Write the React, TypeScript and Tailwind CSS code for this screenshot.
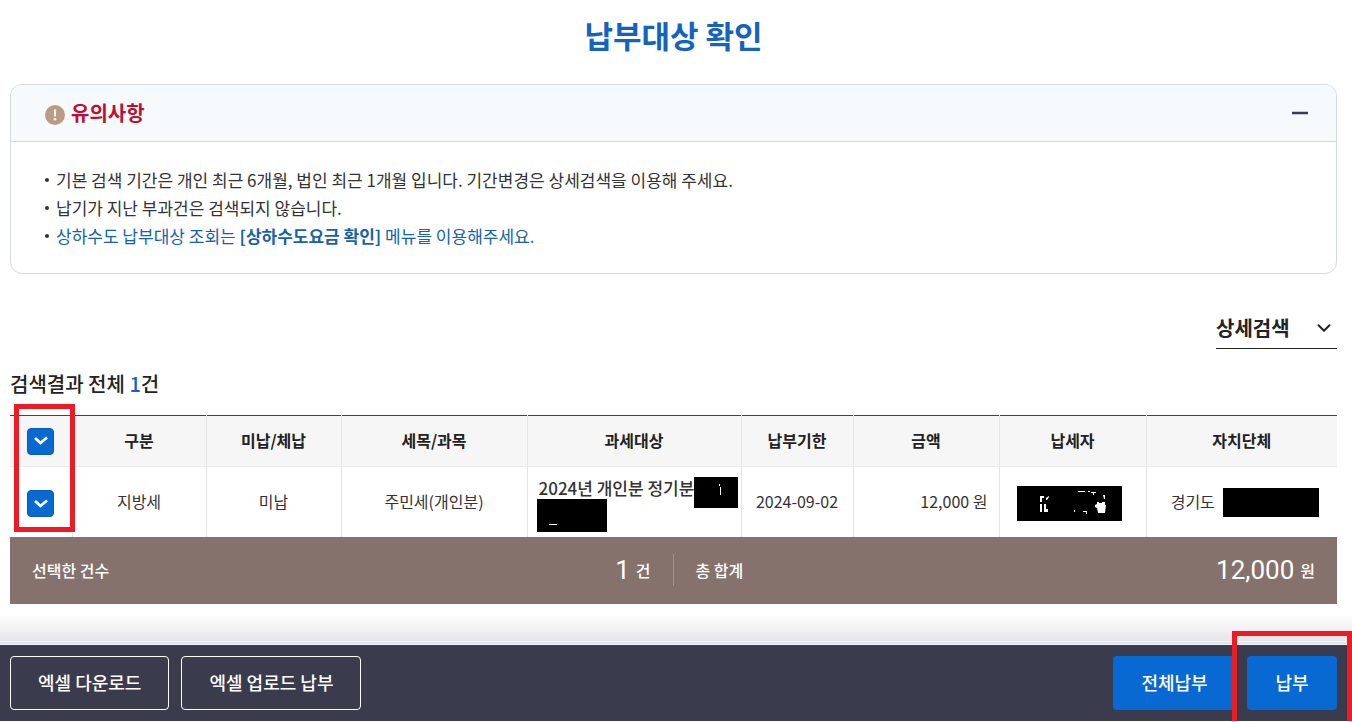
import { useState } from 'react'
import type { ReactNode } from 'react'
import clsx from 'clsx'
import { ChevronDown } from 'lucide-react'

interface Bill {
  kind: string
  status: string
  tax: string
  target: string
  dueDate: string
  amount: string
  region: string
}

const columns = [
  { label: '구분', width: 'w-[134px]' },
  { label: '미납/체납', width: 'w-[135px]' },
  { label: '세목/과목', width: 'w-[186px]' },
  { label: '과세대상', width: 'w-[214px]' },
  { label: '납부기한', width: 'w-[112px]' },
  { label: '금액', width: 'w-[146px]' },
  { label: '납세자', width: 'w-[147px]' },
  { label: '자치단체', width: 'w-[191px]' },
]

const bills: Bill[] = [
  {
    kind: '지방세',
    status: '미납',
    tax: '주민세(개인분)',
    target: '2024년 개인분 정기분',
    dueDate: '2024-09-02',
    amount: '12,000',
    region: '경기도',
  },
]

interface CheckProps {
  label: string
  checked: boolean
  onChange: (checked: boolean) => void
}

function Check({ label, checked, onChange }: CheckProps) {
  return (
    <label className="ml-[17px] grid size-[27px] cursor-pointer place-items-center">
      <input
        type="checkbox"
        aria-label={label}
        checked={checked}
        onChange={(e) => onChange(e.target.checked)}
        className="col-start-1 row-start-1 size-[27px] appearance-none rounded border border-[#0a5cb8] bg-white checked:bg-[#0869d2]"
      />
      {checked && (
        <svg viewBox="0 0 14 10" className="pointer-events-none z-10 col-start-1 row-start-1 h-[10px] w-[14px]">
          <path d="M1 2 L6.5 7 L13 1.5" fill="none" stroke="#fff" strokeWidth="2.8" />
        </svg>
      )}
    </label>
  )
}

function ActionButton({ children, className }: { children: ReactNode; className: string }) {
  return (
    <button
      type="button"
      className={clsx(
        'h-[54px] cursor-pointer rounded pb-0.5 text-lg font-medium whitespace-nowrap text-white',
        className
      )}
    >
      {children}
    </button>
  )
}

function Notice() {
  const [open, setOpen] = useState(true)

  return (
    <section className="overflow-hidden rounded-xl border border-[#d5dade]">
      <div className="flex h-14 items-center justify-between bg-[#f7fafd] pr-[27px] pl-[34px]">
        <h2 className="flex items-center gap-[6px] text-xl font-bold text-[#bf0d35]">
          <svg viewBox="0 0 20 20" className="mt-1 size-5">
            <circle cx="10" cy="10" r="10" fill="#bb9c83" />
            <path d="M8.8 4.5h2.4l-.4 7H9.2z" fill="#fff" />
            <circle cx="10" cy="14.3" r="1.3" fill="#fff" />
          </svg>
          유의사항
        </h2>
        <button
          type="button"
          aria-label="유의사항 접기"
          aria-expanded={open}
          onClick={() => setOpen(!open)}
          className="flex h-6 cursor-pointer items-center"
        >
          <svg viewBox="0 0 18 4" className="h-1 w-[18px]">
            <path d="M1 2h16" stroke="#3a3b4d" strokeWidth="2.4" />
          </svg>
        </button>
      </div>
      {open && (
        <ul className="border-t border-[#ccd8dd] pt-6 pb-[23px] pl-[34px] text-[17px] leading-7 text-[#333]">
          <li className="flex items-center gap-[7px]">
            <span className="size-1 rounded-full bg-[#333]" />
            기본 검색 기간은 개인 최근 6개월, 법인 최근 1개월 입니다. 기간변경은 상세검색을 이용해 주세요.
          </li>
          <li className="flex items-center gap-[7px]">
            <span className="size-1 rounded-full bg-[#333]" />
            납기가 지난 부과건은 검색되지 않습니다.
          </li>
          <li className="flex items-center gap-[7px]">
            <span className="size-1 rounded-full bg-[#333]" />
            <p className="text-[#1562a8]">
              상하수도 납부대상 조회는 <b>[상하수도요금 확인]</b> 메뉴를 이용해주세요.
            </p>
          </li>
        </ul>
      )}
    </section>
  )
}

export default function App() {
  const [selected, setSelected] = useState<boolean[]>(bills.map(() => true))
  const count = selected.filter(Boolean).length

  return (
    <div className="bg-white font-['Noto_Sans_CJK_KR',sans-serif] text-[#222]">
      <main className="pr-[15px] pl-[10px]">
        <h1 className="pt-[11px] pb-[25px] text-center text-[31px] leading-[48px] font-bold text-[#1563bd]">
          납부대상 확인
        </h1>

        <Notice />

        <div className="mt-9 flex justify-end">
          <button
            type="button"
            className="flex h-[39px] w-[121px] cursor-pointer items-center justify-between border-b border-[#222] pr-[2px] pb-0.5 text-xl font-bold whitespace-nowrap"
          >
            상세검색
            <ChevronDown size={22} strokeWidth={2.2} />
          </button>
        </div>

        <h2 className="mt-5 mb-4 text-xl leading-[30px] font-medium">
          검색결과 전체 <span className="text-[#1563bd]">1</span>건
        </h2>

        <div className="relative">
          <table className="w-full table-fixed border-t border-[#444] text-base">
            <colgroup>
              <col className="w-[62px]" />
              {columns.map((col) => (
                <col key={col.label} className={col.width} />
              ))}
            </colgroup>
            <thead className="bg-[#f6f6f6]">
              <tr className="h-[51px] border-b border-[#ebebeb]">
                <th>
                  <Check
                    label="전체 선택"
                    checked={count === bills.length}
                    onChange={(checked) => setSelected(bills.map(() => checked))}
                  />
                </th>
                {columns.map((col) => (
                  <th key={col.label} scope="col" className="border-l border-[#e4e4e4] pb-0.5 font-bold">
                    {col.label}
                  </th>
                ))}
              </tr>
            </thead>
            <tbody className="text-[#333]">
              {bills.map((bill, i) => (
                <tr key={bill.target} className="h-[70px] text-center">
                  <td className="pt-1">
                    <Check
                      label={`${bill.target} 선택`}
                      checked={selected[i]}
                      onChange={(checked) => setSelected(selected.map((v, n) => (n === i ? checked : v)))}
                    />
                  </td>
                  <td className="border-l border-[#e4e4e4] pb-0.5">{bill.kind}</td>
                  <td className="border-l border-[#e4e4e4] pb-0.5">{bill.status}</td>
                  <td className="border-l border-[#e4e4e4] pb-0.5">{bill.tax}</td>
                  <td className="border-l border-[#e4e4e4] pt-[6px] pr-[3px] pl-[9px]">
                    <div className="flex items-start justify-between text-[17px] font-medium whitespace-nowrap">
                      <span className="h-[22px] pl-[2px] leading-[22px]">{bill.target}</span>
                      <svg viewBox="0 0 44 31" className="-mb-[9px] h-[31px] w-11 shrink-0 bg-black">
                        <path d="M25.5 7v2M26.5 10v8" stroke="#fff" />
                      </svg>
                    </div>
                    <svg viewBox="0 0 70 33" className="block h-[33px] w-[70px] bg-black">
                      <path d="M12 25.5h8" stroke="#fff" />
                    </svg>
                  </td>
                  <td className="border-l border-[#e4e4e4] pb-0.5">{bill.dueDate}</td>
                  <td className="border-l border-[#e4e4e4] pr-[11px] pb-0.5 text-right">{bill.amount} 원</td>
                  <td className="border-l border-[#e4e4e4] pt-1 pr-[6px]">
                    <svg viewBox="0 0 105 35" className="mx-auto h-[35px] w-[105px] bg-black">
                      <g fill="#fff">
                        <path d="M23 10h4v2h-2v4h-2zM29 12l3-2v1l-2 3h-1zM23 18h2v8h-2zM27 18h2v5h2v3h-4z" />
                        <path d="M61 5h7v1h-7zM71 5h2v1h-2zM74 6h5v1h-2v2h-1V7h-2zM86 9h2v4h-1zM57 24h1v2h-1zM66 25h4v3h-1v-2h-3z" />
                        <path d="M78 19l2-1v-2h2v1h3v-1h3v3h1l-1 8h-7l-1-5-2-1z" />
                      </g>
                    </svg>
                  </td>
                  <td className="border-l border-[#e4e4e4] pb-0.5 pl-[6px]">
                    <div className="flex items-center justify-center gap-2">
                      {bill.region}
                      <span className="mt-1 h-[29px] w-24 bg-black" />
                    </div>
                  </td>
                </tr>
              ))}
            </tbody>
          </table>

          {/* highlight around the checkbox column */}
          <div className="pointer-events-none absolute -top-[11px] left-1 h-32 w-[61px] border-5 border-[#ed1c24]" />
        </div>

        <div className="grid h-[67px] grid-cols-2 items-center bg-[#85726d] font-medium text-white">
          <div className="flex items-center justify-between border-r border-[#a29490] pr-[22px] pl-[22px]">
            <span>선택한 건수</span>
            <span className="flex items-center gap-[6px]">
              <span className="font-[Roboto] text-[26px] leading-8 font-normal">{count}</span>건
            </span>
          </div>
          <div className="flex items-center justify-between pr-[22px] pl-[22px]">
            <span>총 합계</span>
            <span className="flex items-center gap-[6px]">
              <span className="font-[Roboto] text-[26px] leading-8 font-normal">{count ? '12,000' : '0'}</span>원
            </span>
          </div>
        </div>
      </main>

      <div className="relative mt-[11px]">
        <div className="h-[26px] bg-linear-to-b from-white to-[#e6e5ea]" />
        <div className="h-1 border-y border-[#f3f5f8] bg-[#dde4ec]" />
        <footer className="flex h-[76px] items-center justify-between bg-[#3a3b4d] pr-[15px] pl-[10px]">
          <div className="flex gap-3">
            <ActionButton className="border border-white px-[27px]">엑셀 다운로드</ActionButton>
            <ActionButton className="border border-white px-[27px]">엑셀 업로드 납부</ActionButton>
          </div>
          <div className="flex gap-[11px]">
            <ActionButton className="w-[123px] bg-[#0869d2]">전체납부</ActionButton>
            <ActionButton className="w-[90px] bg-[#0869d2]">납부</ActionButton>
          </div>
        </footer>
        {/* highlight around the pay button */}
        <div className="pointer-events-none absolute right-0 bottom-0 h-[90px] w-[120px] border-5 border-b-0 border-[#ed1c24]" />
      </div>
    </div>
  )
}
